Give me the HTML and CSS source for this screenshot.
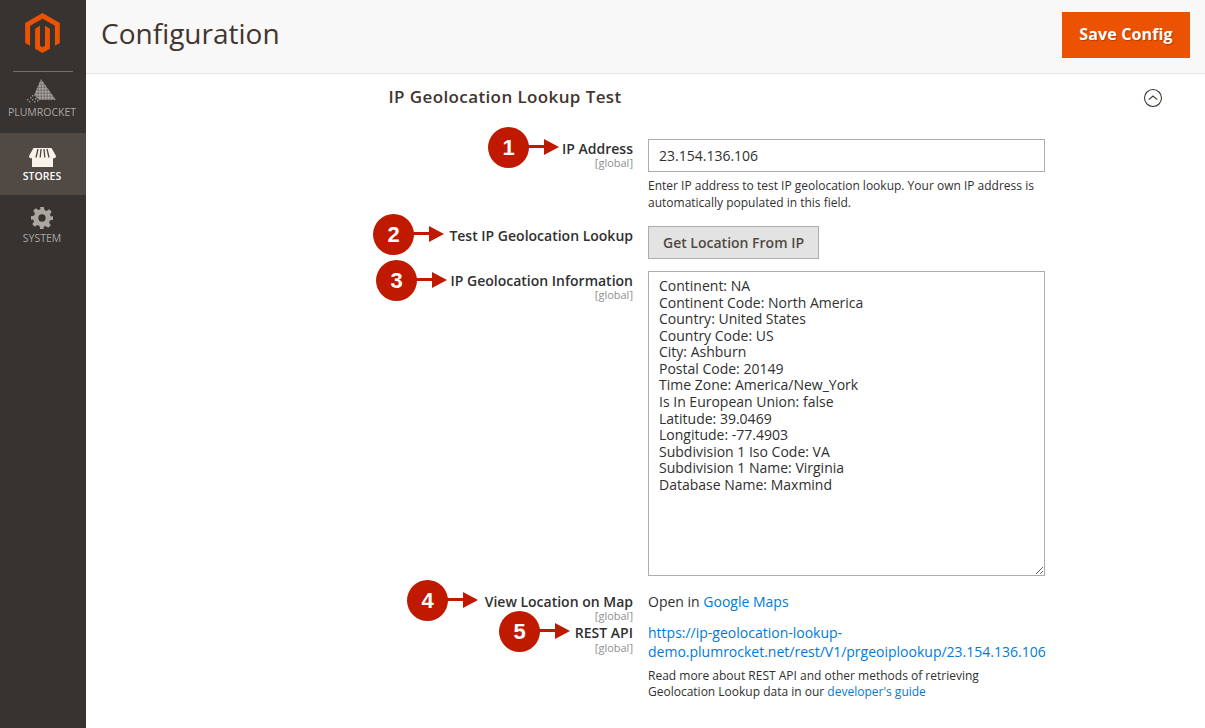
FILE: index.html
```html
<!DOCTYPE html>
<html lang="en">
<head>
<meta charset="utf-8">
<title>Configuration</title>
<link rel="stylesheet" href="styles.css">
</head>
<body>
<div class="app">
  <nav class="sidebar">
    <div class="logo">
      <svg width="35" height="40" viewBox="0 0 31.800 36.700"><path fill="#eb5202" d="M15.900 0 0 9.200V27.500L4.500 30.100V11.800L15.900 5.300 27.300 11.800V30.100L31.800 27.500V9.200Z"/><path fill="#eb5202" d="M18.200 30.100 15.900 31.400 13.600 30.100V11.800L9.100 14.400V32.700L15.900 36.700 22.700 32.700V14.400L18.200 11.800Z"/></svg>
    </div>
    <div class="nav-item nav-plum">
      <svg width="30" height="24" viewBox="0 0 30 24"><defs><pattern id="dots" width="1.500" height="1.500" patternUnits="userSpaceOnUse"><rect width="1.200" height="1.200" fill="#bdb9b3"/></pattern></defs><path fill="url(#dots)" d="M14 0 29 21H12L7 16Z"/><path fill="#8d8985" d="M0 20h1.500v1.500H0zM2 22h1.500v1.500H2zM3 18h1.500v1.500H3zM5 20h1.500v1.500H5zM5 16h1.500v1.500H5zM7 22h1.500v1.500H7zM8 19h1.500v1.500H8zM10 21h1.500v1.500H10z"/></svg>
      <span>PLUMROCKET</span>
    </div>
    <div class="nav-item nav-active">
      <svg width="27" height="19" viewBox="0 0 27 19"><path fill="#f7f3eb" d="M3 9h21v10H3z"/><path fill="#f7f3eb" d="M4.500 0h18L27 8c0 2.500-3 3-4.500 1.500C21 11 18.500 11 17.500 9.500 16.500 11 14 11 13.500 9.500 13 11 10.500 11 9.500 9.500 8.500 11 6 11 4.500 9.500 3 11 0 10.500 0 8Z"/><path stroke="#4a4542" stroke-width="1.300" d="M9 1 7 9.500M12 1 11.200 9.500M15 1 15.800 9.500M18 1 20 9.500"/></svg>
      <span>STORES</span>
    </div>
    <div class="nav-item">
      <svg width="22" height="22" viewBox="0 0 24 24"><path fill="#aaa6a0" fill-rule="evenodd" d="M10 0h4l.7 3.400 2.200.9 2.900-1.900 2.800 2.800-1.900 2.900.9 2.200L24 10v4l-3.400.7-.9 2.200 1.900 2.900-2.800 2.800-2.900-1.900-2.200.9L14 24h-4l-.7-3.400-2.200-.9-2.900 1.900-2.800-2.800 1.900-2.900-.9-2.200L0 14v-4l3.400-.7.9-2.200-1.900-2.900 2.800-2.800 2.900 1.900 2.200-.9ZM12 8a4 4 0 1 0 0 8 4 4 0 0 0 0-8Z"/></svg>
      <span>SYSTEM</span>
    </div>
  </nav>
  <main class="main">
    <header class="page-head">
      <h1>Configuration</h1>
      <button class="save">Save Config</button>
    </header>
    <section class="section">
      <div class="section-head">
        <h2>IP Geolocation Lookup Test</h2>
        <svg class="collapse" width="20" height="20" viewBox="0 0 20 20"><circle cx="10" cy="10" r="8.500" fill="none" stroke="#41362f" stroke-width="1.100"/><path d="M5.800 11.700 10 8l4.200 3.700" fill="none" stroke="#41362f" stroke-width="1.100"/></svg>
      </div>
      <div class="form">
        <div class="row row-ip">
          <div class="label"><b>IP Address</b><i>[global]</i>
            <span class="callout"><em>1</em></span></div>
          <div class="value">
            <input class="field" type="text" value="23.154.136.106">
            <p class="note">Enter IP address to test IP geolocation lookup. Your own IP address is automatically populated in this field.</p>
          </div>
        </div>
        <div class="row row-test">
          <div class="label"><b>Test IP Geolocation Lookup</b>
            <span class="callout"><em>2</em></span></div>
          <div class="value"><button class="get">Get Location From IP</button></div>
        </div>
        <div class="row row-info">
          <div class="label"><b>IP Geolocation Information</b><i>[global]</i>
            <span class="callout"><em>3</em></span></div>
          <div class="value">
<textarea class="area">Continent: NA
Continent Code: North America
Country: United States
Country Code: US
City: Ashburn
Postal Code: 20149
Time Zone: America/New_York
Is In European Union: false
Latitude: 39.0469
Longitude: -77.4903
Subdivision 1 Iso Code: VA
Subdivision 1 Name: Virginia
Database Name: Maxmind</textarea>
          </div>
        </div>
        <div class="row row-map">
          <div class="label"><b>View Location on Map</b><i>[global]</i>
            <span class="callout"><em>4</em></span></div>
          <div class="value text">Open in <a href="#">Google Maps</a></div>
        </div>
        <div class="row row-api">
          <div class="label"><b>REST API</b><i>[global]</i>
            <span class="callout"><em>5</em></span></div>
          <div class="value text">
            <a href="#">https://ip-geolocation-lookup-demo.plumrocket.net/rest/V1/prgeoiplookup/23.154.136.106</a>
            <p class="note">Read more about REST API and other methods of retrieving Geolocation Lookup data in our <a href="#">developer's guide</a></p>
          </div>
        </div>
      </div>
    </section>
  </main>
</div>
</body>
</html>
```
FILE: styles.css
```css
* { box-sizing: border-box; }
html, body { margin: 0; height: 100%; overflow: hidden; }
body { font-family: "Open Sans", sans-serif; color: #303030; background: #fff; }
.app { display: flex; height: 728px; }
.sidebar { width: 86px; flex: none; background: #373330; display: flex; flex-direction: column; align-items: center; }
.logo { width: 60px; height: 72px; padding: 13px 1px 0 0; border-bottom: 1px solid #736e6a; display: flex; justify-content: center; align-items: flex-start; }
.nav-item { width: 86px; height: 62px; display: flex; flex-direction: column; align-items: center; color: #aaa6a0; font-size: 10.500px; font-weight: 400; }
.nav-item span { line-height: 14px; margin-top: 2px; }
.nav-plum { height: 61px; padding-top: 7px; padding-right: 2px; }
.nav-active { background: #514943; color: #fff; padding-top: 15px; padding-right: 2px; font-weight: 600; }
.nav-active span { margin-top: 2px; }
.nav-item:last-child { padding-top: 12px; padding-right: 2px; }
.main { flex: 1; min-width: 0; }
.page-head { height: 74px; background: #f8f8f8; border-bottom: 1px solid #e3e3e3; padding: 12px 15px 0 15px; display: flex; justify-content: space-between; align-items: flex-start; }
h1 { margin: -1px 0 0; font-size: 28px; font-weight: 400; line-height: 44px; color: #41362f; }
.save { width: 128px; height: 46px; border: 0; background: #eb5202; color: #fff; font: 700 16px/43px "Open Sans", sans-serif; letter-spacing: .15px; padding: 0 0 1px; text-shadow: 1px 1px 1px rgba(0,0,0,.25); }
.section { padding: 0 0 0 302.500px; }
.section-head { display: flex; justify-content: space-between; align-items: center; height: 47px; padding-right: 42.500px; }
h2 { margin: -2px 0 0; font-size: 17px; font-weight: 600; letter-spacing: .39px; line-height: 46px; color: #41362f; }
.collapse { margin-top: 0; }
.form { width: 656.500px; padding-top: 18px; padding-left: .5px; }
.row { display: grid; grid-template-columns: 244px 397px; column-gap: 15px; }
.label { position: relative; display: flex; flex-direction: column; align-items: flex-end; text-align: right; }
.label b { font-size: 14px; font-weight: 600; line-height: 19px; color: #303030; }
.label i { font-size: 11px; font-style: normal; line-height: 10px; color: #8f8f8f; }
.row-api .label i { margin-top: 1px; }
.field { display: block; width: 397px; height: 33px; border: 1px solid #adadad; padding: 0 10px; font: 14px "Open Sans", sans-serif; color: #303030; border-radius: 0; background: #fff; }
.note { margin: 6px 0 0; font-size: 12px; line-height: 16.500px; color: #303030; }
.row-ip { height: 87px; }
.row-test { height: 45px; }
.get { display: block; width: 171px; height: 33px; background: #e3e3e3; border: 1px solid #adadad; color: #514943; font: 600 14px "Open Sans", sans-serif; padding: 0; }
.row-info { height: 321px; }
.area { display: block; width: 397px; height: 305px; border: 1px solid #adadad; padding: 6px 10px; font: 14px/16.560px "Open Sans", sans-serif; color: #303030; border-radius: 0; margin: 0; resize: both; background: #fff; }
.row-map { height: 31px; }
.text { font-size: 14px; line-height: 19px; color: #303030; }
.text a, .note a { color: #007bdb; text-decoration: none; }
.row-api { height: 80px; }
.row-api .note { margin-top: 6.500px; }
.callout { position: absolute; width: 71px; height: 41px; }
.callout::before { content: ""; position: absolute; left: 38px; right: 14px; top: 18px; height: 3px; background: #bf1a00; }
.callout::after { content: ""; position: absolute; right: 0; top: 12px; border-left: 15px solid #bf1a00; border-top: 8px solid transparent; border-bottom: 8px solid transparent; }
.callout em { position: absolute; left: 0; top: 0; width: 41px; height: 41px; border-radius: 50%; background: #bf1a00; color: #fff; font: 700 22px/41px "Liberation Sans", sans-serif; text-align: center; }
.row-ip .callout { left: 99px; top: -12px; }
.row-test .callout { left: -16px; top: -12px; }
.row-info .callout { left: -13px; top: -11px; }
.row-map .callout { left: 18px; top: -12px; }
.row-api .callout { left: 110px; top: -12px; }
```
